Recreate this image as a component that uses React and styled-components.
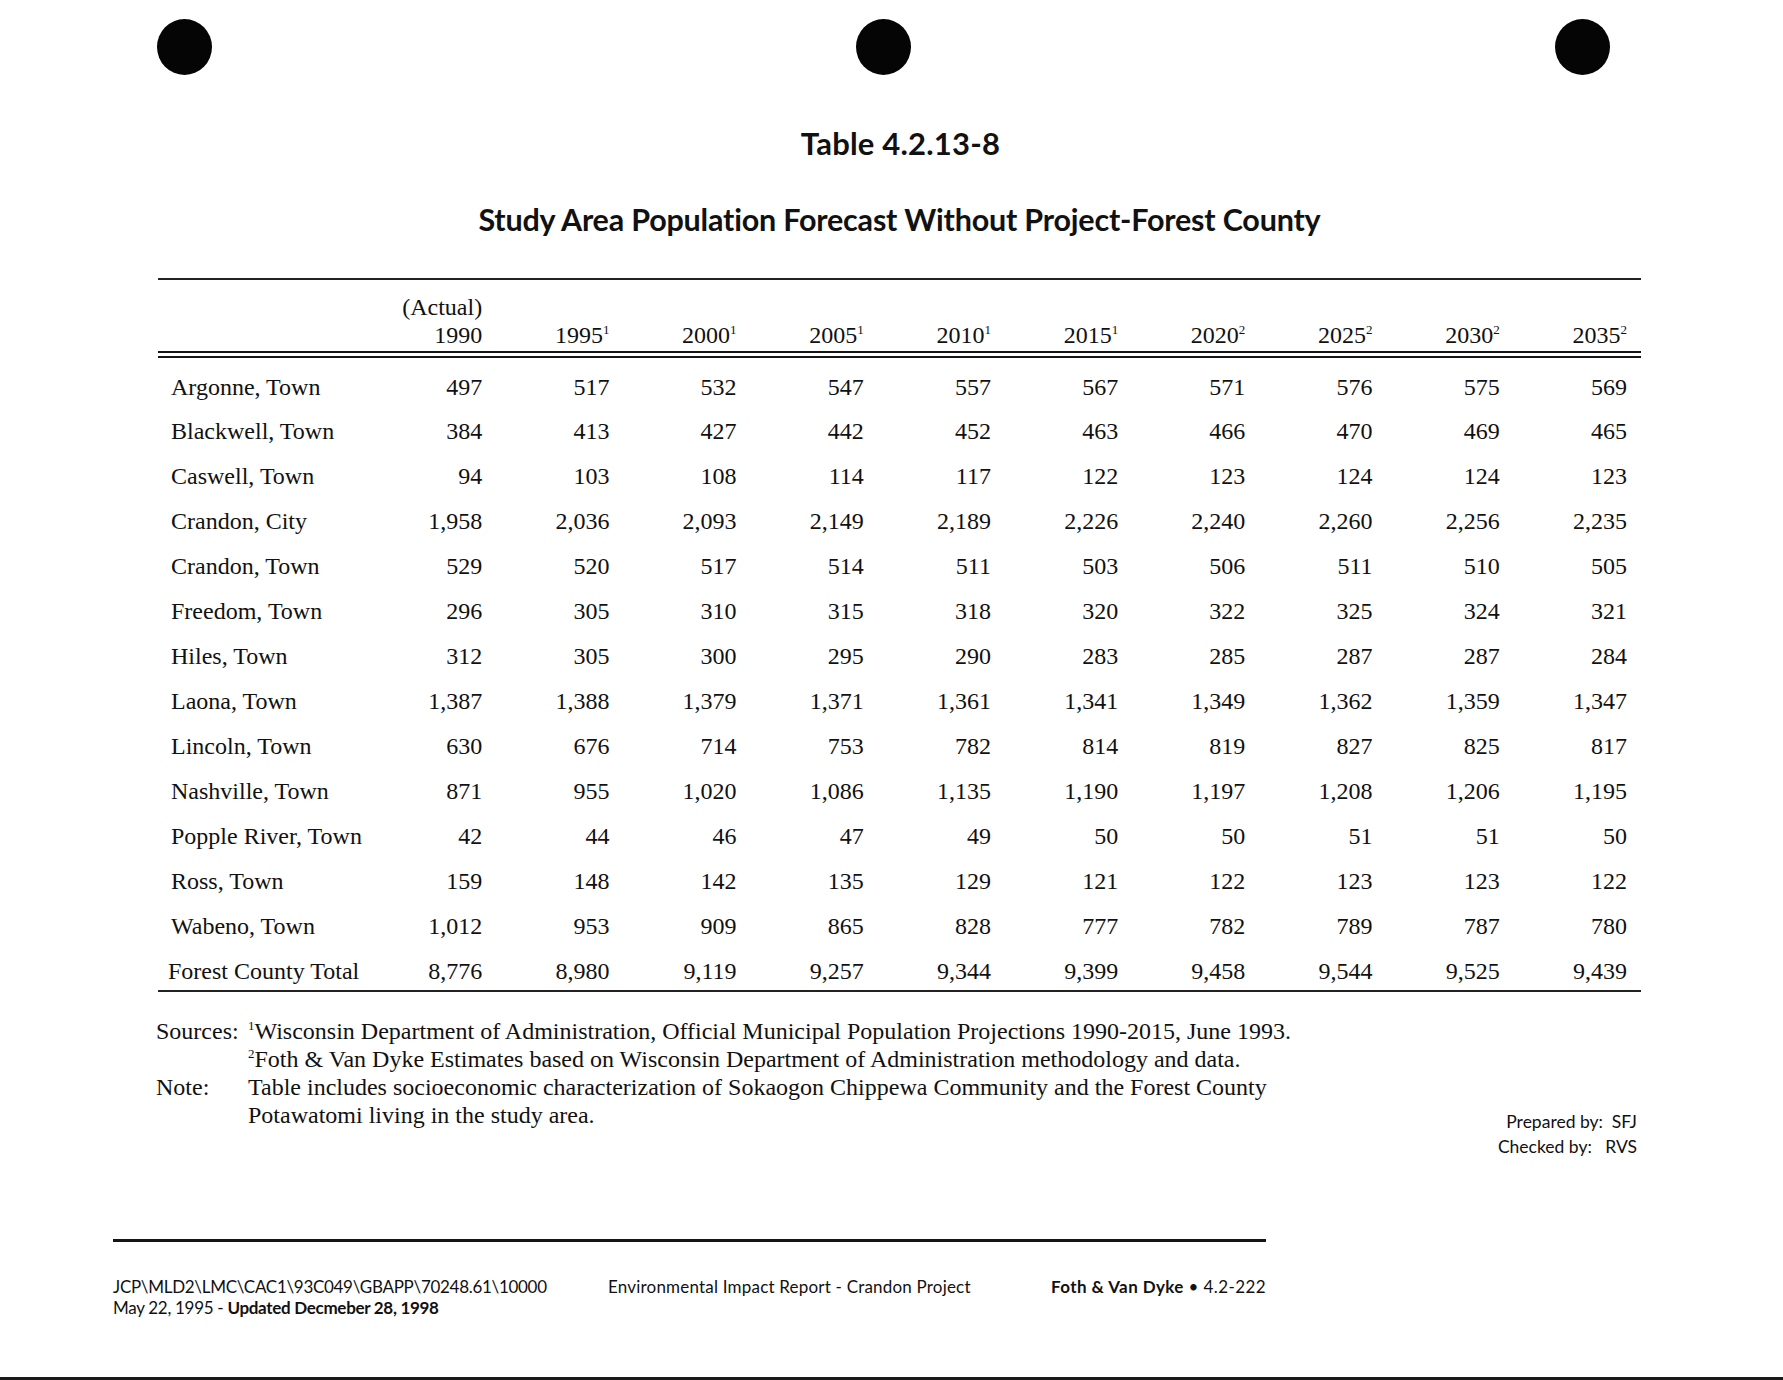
import styled, { createGlobalStyle } from 'styled-components';

const GlobalStyle = createGlobalStyle`
  html, body {
    margin: 0;
    padding: 0;
    background: #fff;
  }
  body {
    color: #111;
    font-family: "Liberation Serif", "Times New Roman", serif;
  }
`;

const Page = styled.div`
  width: 1783px;
  height: 1380px;
  overflow: hidden;
  display: flex;
  flex-direction: column;
  background: #fff;
`;

const DotsRow = styled.div`
  display: flex;
  justify-content: space-between;
  width: 1453px;
  margin-left: 157px;
  padding-top: 19px;
`;

const Dot = styled.span`
  display: block;
  width: 55px;
  height: 56px;
  border-radius: 50%;
  background: #050505;
`;

const Content = styled.div`
  width: 1483px;
  margin-left: 158px;
`;

const Title = styled.h1`
  margin: 48px 0 0;
  font-family: Lato, "Open Sans", sans-serif;
  font-weight: 700;
  font-size: 31px;
  line-height: 40px;
  text-align: center;
  letter-spacing: 0.2px;
  padding-left: 2px;
`;

const Subtitle = styled.h2`
  margin: 36px 0 0;
  font-family: Lato, "Open Sans", sans-serif;
  font-weight: 700;
  font-size: 30.5px;
  line-height: 40px;
  text-align: center;
  letter-spacing: -0.2px;
`;

const Table = styled.div`
  margin-top: 39px;
  border-top: 2px solid #222;
  border-bottom: 2px solid #222;
  font-size: 24px;
`;

const HeadRow = styled.div`
  display: grid;
  grid-template-columns: 211px repeat(10, 127.2px);
  padding: 13px 0 2px;
  border-bottom: 7px double #151515;
  line-height: 28px;
`;

const HeadCell = styled.div`
  text-align: right;
  padding-right: 14px;
  white-space: nowrap;
`;

const Sup = styled.sup`
  font-size: 13px;
  line-height: 0;
  vertical-align: 9px;
`;

const Body = styled.div`
  padding-top: 6.5px;
`;

const Row = styled.div`
  display: grid;
  grid-template-columns: 211px repeat(10, 127.2px);
  height: ${(p) => (p.$total ? '41px' : '44.95px')};
  line-height: 44.95px;
`;

const Label = styled.div`
  padding-left: ${(p) => (p.$total ? '10px' : '13px')};
  white-space: nowrap;
`;

const Num = styled.div`
  text-align: right;
  padding-right: 14px;
  white-space: nowrap;
`;

const NotesRow = styled.div`
  display: flex;
  justify-content: space-between;
  align-items: flex-start;
  margin-top: 25px;
`;

const Notes = styled.div`
  display: grid;
  grid-template-columns: 92px auto;
  margin-left: -2px;
  font-size: 24px;
  line-height: 28px;
`;

const NoteSup = styled.sup`
  font-size: 13px;
  line-height: 0;
  vertical-align: 9px;
`;

const Prepared = styled.div`
  padding-top: 92px;
  padding-right: 4px;
  text-align: right;
  font-family: Lato, "Open Sans", sans-serif;
  font-size: 17.5px;
  line-height: 25px;
`;

const Footer = styled.div`
  width: 1153px;
  margin-left: 113px;
  margin-top: 80px;
  border-top: 3px solid #151515;
  padding-top: 34px;
  display: grid;
  grid-template-columns: 495px 1fr auto;
  font-family: Lato, "Open Sans", sans-serif;
  font-size: 17px;
  line-height: 21px;
`;

const FooterLeft = styled.div`
  letter-spacing: -0.3px;
`;

const FooterMiddle = styled.div`
  letter-spacing: 0.2px;
`;

const FooterRight = styled.div`
  text-align: right;
  letter-spacing: 0.4px;
`;

const Bold = styled.b`
  font-weight: 700;
`;

const BottomRule = styled.div`
  margin-top: auto;
  height: 3px;
  background: #1a1a1a;
`;

const years = [
  ['1995', 1], ['2000', 1], ['2005', 1], ['2010', 1], ['2015', 1],
  ['2020', 2], ['2025', 2], ['2030', 2], ['2035', 2],
];

const rows = [
  ['Argonne, Town', '497', '517', '532', '547', '557', '567', '571', '576', '575', '569'],
  ['Blackwell, Town', '384', '413', '427', '442', '452', '463', '466', '470', '469', '465'],
  ['Caswell, Town', '94', '103', '108', '114', '117', '122', '123', '124', '124', '123'],
  ['Crandon, City', '1,958', '2,036', '2,093', '2,149', '2,189', '2,226', '2,240', '2,260', '2,256', '2,235'],
  ['Crandon, Town', '529', '520', '517', '514', '511', '503', '506', '511', '510', '505'],
  ['Freedom, Town', '296', '305', '310', '315', '318', '320', '322', '325', '324', '321'],
  ['Hiles, Town', '312', '305', '300', '295', '290', '283', '285', '287', '287', '284'],
  ['Laona, Town', '1,387', '1,388', '1,379', '1,371', '1,361', '1,341', '1,349', '1,362', '1,359', '1,347'],
  ['Lincoln, Town', '630', '676', '714', '753', '782', '814', '819', '827', '825', '817'],
  ['Nashville, Town', '871', '955', '1,020', '1,086', '1,135', '1,190', '1,197', '1,208', '1,206', '1,195'],
  ['Popple River, Town', '42', '44', '46', '47', '49', '50', '50', '51', '51', '50'],
  ['Ross, Town', '159', '148', '142', '135', '129', '121', '122', '123', '123', '122'],
  ['Wabeno, Town', '1,012', '953', '909', '865', '828', '777', '782', '789', '787', '780'],
];

const total = ['Forest County Total', '8,776', '8,980', '9,119', '9,257', '9,344', '9,399', '9,458', '9,544', '9,525', '9,439'];

export default function App() {
  return (
    <Page>
      <GlobalStyle />
      <DotsRow>
        <Dot />
        <Dot />
        <Dot />
      </DotsRow>

      <Content>
        <Title>Table 4.2.13-8</Title>
        <Subtitle>Study Area Population Forecast Without Project-Forest County</Subtitle>

        <Table>
          <HeadRow>
            <div />
            <HeadCell>
              (Actual)
              <br />
              1990
            </HeadCell>
            {years.map(([y, n]) => (
              <HeadCell key={y}>
                <br />
                {y}
                <Sup>{n}</Sup>
              </HeadCell>
            ))}
          </HeadRow>
          <Body>
            {rows.map((r) => (
              <Row key={r[0]}>
                <Label>{r[0]}</Label>
                {r.slice(1).map((v, i) => (
                  <Num key={i}>{v}</Num>
                ))}
              </Row>
            ))}
            <Row $total>
              <Label $total>{total[0]}</Label>
              {total.slice(1).map((v, i) => (
                <Num key={i}>{v}</Num>
              ))}
            </Row>
          </Body>
        </Table>

        <NotesRow>
          <Notes>
            <div>Sources:</div>
            <div>
              <NoteSup>1</NoteSup>Wisconsin Department of Administration, Official Municipal Population Projections 1990-2015, June 1993.
            </div>
            <div />
            <div>
              <NoteSup>2</NoteSup>Foth &amp; Van Dyke Estimates based on Wisconsin Department of Administration methodology and data.
            </div>
            <div>Note:</div>
            <div>
              Table includes socioeconomic characterization of Sokaogon Chippewa Community and the Forest County
              <br />
              Potawatomi living in the study area.
            </div>
          </Notes>
          <Prepared>
            Prepared by:&nbsp; SFJ
            <br />
            Checked by:&nbsp;&nbsp; RVS
          </Prepared>
        </NotesRow>
      </Content>

      <Footer>
        <FooterLeft>
          JCP\MLD2\LMC\CAC1\93C049\GBAPP\70248.61\10000
          <br />
          May 22, 1995 - <Bold>Updated Decmeber 28, 1998</Bold>
        </FooterLeft>
        <FooterMiddle>Environmental Impact Report - Crandon Project</FooterMiddle>
        <FooterRight>
          <Bold>Foth &amp; Van Dyke</Bold> • 4.2-222
        </FooterRight>
      </Footer>

      <BottomRule />
    </Page>
  );
}
